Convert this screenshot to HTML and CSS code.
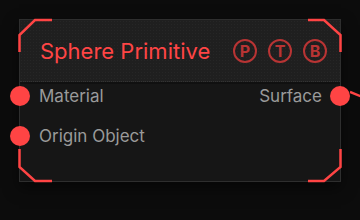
FILE: index.html
```html
<!DOCTYPE html>
<html lang="en">
<head>
  <meta charset="UTF-8">
  <title>Sphere Primitive</title>
  <link rel="stylesheet" href="styles.css">
</head>
<body>
  <div class="canvas">
    <div class="node">
      <div class="node-header">
        <span class="node-title">Sphere Primitive</span>
        <div class="flags">
          <span class="flag">P</span>
          <span class="flag">T</span>
          <span class="flag">B</span>
        </div>
      </div>
      <div class="node-body">
        <div class="row">
          <span class="port port-in"></span>
          <span class="label">Material</span>
          <span class="label">Surface</span>
          <span class="port port-out"></span>
          <svg class="wire" width="20" height="12" viewBox="0 0 20 12"><line x1="0" y1="2" x2="20" y2="10"/></svg>
        </div>
        <div class="row">
          <span class="port port-in"></span>
          <span class="label">Origin Object</span>
        </div>
      </div>
      <svg class="brackets" width="322" height="163" viewBox="0 0 322 163">
        <polyline points="0.5,33 0.5,16 16,1 33,1"/>
        <polyline points="289,1 305,1 321.5,16 321.5,33"/>
        <polyline points="0.5,130 0.5,148 16,162 33,162"/>
        <polyline points="289,162 305,162 321.5,148 321.5,130"/>
      </svg>
    </div>
  </div>
</body>
</html>
```

FILE: styles.css
```css
body {
  margin: 0;
  width: 360px;
  height: 220px;
  overflow: hidden;
  background-color: #0c0c0c;
  font-family: Inter, "Noto Sans", sans-serif;
}

.canvas {
  padding: 19px 0 0 19px;
}

.node {
  position: relative;
  width: 320px;
  height: 161px;
  background-color: #161616;
  border: 1px solid #2e2e2e;
  box-shadow: 0 6px 14px rgba(0, 0, 0, 0.5);
}

.node-header {
  height: 61px;
  display: flex;
  align-items: center;
  justify-content: space-between;
  padding: 0 13px 0 20px;
  background-color: #1f1f1f;
  background-image: radial-gradient(rgba(255, 255, 255, 0.03) 1px, transparent 1px);
  background-size: 3px 3px;
  border-bottom: 1px dotted #333;
  box-shadow: 0 2px 0 #101010;
}

.node-title {
  color: #ff4545;
  font-size: 22px;
}

.flags {
  display: flex;
  gap: 11px;
}

.flag {
  width: 20px;
  height: 20px;
  border: 2px solid #b83434;
  border-radius: 50%;
  color: #b83434;
  font-size: 16px;
  font-weight: bold;
  line-height: 20px;
  text-align: center;
}

.node-body {
  display: flex;
  flex-direction: column;
  gap: 20px;
  padding-top: 4px;
}

.row {
  position: relative;
  height: 20px;
  display: flex;
  align-items: center;
  justify-content: space-between;
  padding: 0 18px 0 19px;
}

.label {
  color: #9a9a9a;
  font-size: 17px;
}

.port {
  position: absolute;
  top: 0;
  width: 20px;
  height: 20px;
  border-radius: 50%;
  background-color: #ff4444;
}

.port-in {
  left: -10px;
}

.port-out {
  right: -10px;
}

.wire {
  position: absolute;
  right: -30px;
  top: 4px;
  stroke: #ff4444;
  stroke-width: 2.5;
}

.brackets {
  position: absolute;
  left: -1px;
  top: -1px;
  overflow: visible;
  fill: none;
  stroke: #ff4444;
  stroke-width: 2.5;
}
```
